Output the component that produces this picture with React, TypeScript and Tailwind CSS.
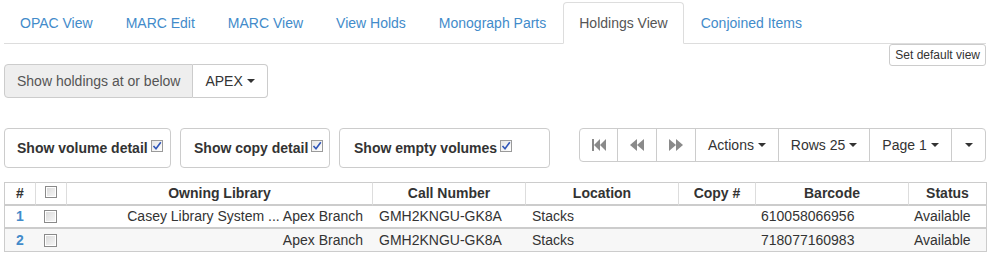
import React from "react";

const Caret = () => (
  <span className="inline-block w-0 h-0 ml-[4px] align-middle border-t-[4px] border-t-[#333] border-x-[4px] border-x-transparent" />
);

const CheckedBox = () => (
  <span className="inline-flex items-center justify-center w-[12px] h-[12px] border border-[#9a9a9a] bg-gradient-to-br from-[#e6e6e6] to-white align-middle ml-[3px] relative top-[-2px]">
    <svg width="10" height="10" viewBox="0 0 10 10">
      <path d="M1.5 5 L4 7.8 L8.8 1.2" fill="none" stroke="#2f55b8" strokeWidth="1.6" />
    </svg>
  </span>
);

const EmptyBox = () => (
  <span className="inline-block w-[13px] h-[13px] border border-[#8a8a8a] bg-gradient-to-br from-[#d8d8d8] to-[#f8f8f8] shadow-[inset_0_0_0_1px_#ffffff] align-middle" />
);

const FastBack = () => (
  <svg width="14" height="12" viewBox="0 0 14 12">
    <rect x="0" y="0" width="2" height="12" fill="#8a8a8a" />
    <path d="M2 6 L8 0 L8 12 Z" fill="#8a8a8a" />
    <path d="M8 6 L14 0 L14 12 Z" fill="#8a8a8a" />
  </svg>
);
const Back = () => (
  <svg width="14" height="12" viewBox="0 0 14 12">
    <path d="M0 6 L7 0 L7 12 Z" fill="#8a8a8a" />
    <path d="M7 6 L14 0 L14 12 Z" fill="#8a8a8a" />
  </svg>
);
const Fwd = () => (
  <svg width="14" height="12" viewBox="0 0 14 12">
    <path d="M0 0 L7 6 L0 12 Z" fill="#8a8a8a" />
    <path d="M7 0 L14 6 L7 12 Z" fill="#8a8a8a" />
  </svg>
);

const tabs = [
  "OPAC View",
  "MARC Edit",
  "MARC View",
  "View Holds",
  "Monograph Parts",
  "Holdings View",
  "Conjoined Items",
];

export default function App() {
  return (
    <div className="font-['Liberation_Sans',Arial,sans-serif] text-[14px] text-[#333] bg-white w-[1001px] h-[265px] overflow-hidden">
      <div className="ml-[4px] w-[982px] pt-[2px]">
        <ul className="flex border-b border-[#ddd]">
          {tabs.map((t) => {
            const active = t === "Holdings View";
            return (
              <li key={t} className="mr-[1px] -mb-px">
                <a
                  className={
                    "block px-[15px] py-[10px] leading-[20px] border rounded-t-[4px] " +
                    (active
                      ? "border-[#ddd] border-b-white bg-white text-[#555]"
                      : "border-transparent text-[#428bca]")
                  }
                >
                  {t}
                </a>
              </li>
            );
          })}
        </ul>

        <div className="flex justify-end h-[20px]">
          <button className="h-[22px] px-[5px] text-[12px] leading-[18px] border border-[#ccc] rounded-[3px] bg-white text-[#333] shrink-0">
            Set default view
          </button>
        </div>

        <div className="flex h-[34px]">
          <span className="flex items-center px-[12px] border border-[#ccc] bg-[#eee] text-[#555] rounded-l-[4px] leading-[20px]">
            Show holdings at or below
          </span>
          <button className="flex items-center px-[12px] border border-l-0 border-[#ccc] bg-white rounded-r-[4px] text-[#333] leading-[20px]">
            APEX
            <Caret />
          </button>
        </div>

        <div className="flex justify-between items-start mt-[30px]">
          <div className="flex gap-[9px]">
            <div className="h-[40px] w-[167px] border border-[#ccc] rounded-[4px] flex items-center pl-[12px] font-bold">
              Show volume detail
              <CheckedBox />
            </div>
            <div className="h-[40px] w-[150px] border border-[#ccc] rounded-[4px] flex items-center pl-[13px] font-bold">
              Show copy detail
              <CheckedBox />
            </div>
            <div className="h-[40px] w-[211px] border border-[#ccc] rounded-[4px] flex items-center pl-[14px] font-bold">
              Show empty volumes
              <CheckedBox />
            </div>
          </div>

          <div className="flex h-[34px]">
            <button className="w-[39px] flex items-center justify-center border border-[#ccc] rounded-l-[4px] bg-white">
              <FastBack />
            </button>
            <button className="w-[40px] -ml-px flex items-center justify-center border border-[#ccc] bg-white">
              <Back />
            </button>
            <button className="w-[40px] -ml-px flex items-center justify-center border border-[#ccc] bg-white">
              <Fwd />
            </button>
            <button className="w-[84px] -ml-px flex items-center justify-center border border-[#ccc] bg-white text-[#333]">
              Actions
              <Caret />
            </button>
            <button className="w-[92px] -ml-px flex items-center justify-center border border-[#ccc] bg-white text-[#333]">
              Rows 25
              <Caret />
            </button>
            <button className="w-[83px] -ml-px flex items-center justify-center border border-[#ccc] bg-white text-[#333]">
              Page 1
              <Caret />
            </button>
            <button className="w-[35px] -ml-px flex items-center justify-center border border-[#ccc] rounded-r-[4px] bg-white">
              <span className="inline-block w-0 h-0 border-t-[4px] border-t-[#333] border-x-[4px] border-x-transparent" />
            </button>
          </div>
        </div>

        <table className="mt-[14px] w-[982px] table-fixed border-separate border-spacing-0 border-x border-[#ccc]">
          <colgroup>
            <col className="w-[30px]" />
            <col className="w-[31px]" />
            <col className="w-[306px]" />
            <col className="w-[153px]" />
            <col className="w-[153px]" />
            <col className="w-[77px]" />
            <col className="w-[153px]" />
            <col className="w-[78px]" />
          </colgroup>
          <thead>
            <tr className="h-[24px]">
              <th className="border-t border-b-2 border-[#ccc] text-center font-bold p-0">#</th>
              <th className="border-t border-b-2 border-l border-[#ccc] border-l-[#ddd] p-0">
                <div className="flex justify-center"><span className="inline-block w-[12px] h-[12px] border border-[#8a8a8a] bg-gradient-to-br from-[#d8d8d8] to-[#f8f8f8] shadow-[inset_0_0_0_1px_#ffffff] relative top-[-2px]" /></div>
              </th>
              <th className="border-t border-b-2 border-l border-[#ccc] border-l-[#ddd] text-center font-bold p-0">Owning Library</th>
              <th className="border-t border-b-2 border-l border-[#ccc] border-l-[#ddd] text-center font-bold p-0">Call Number</th>
              <th className="border-t border-b-2 border-l border-[#ccc] border-l-[#ddd] text-center font-bold p-0">Location</th>
              <th className="border-t border-b-2 border-l border-[#ccc] border-l-[#ddd] text-center font-bold p-0">Copy #</th>
              <th className="border-t border-b-2 border-l border-[#ccc] border-l-[#ddd] text-center font-bold p-0">Barcode</th>
              <th className="border-t border-b-2 border-l border-[#ccc] border-l-[#ddd] text-center font-bold p-0">Status</th>
            </tr>
          </thead>
          <tbody>
            {[
              { n: "1", lib: "Casey Library System ... Apex Branch", bc: "610058066956", bg: "bg-white", b: "border-b-2" },
              { n: "2", lib: "Apex Branch", bc: "718077160983", bg: "bg-[#f7f7f7]", b: "border-b" },
            ].map((r) => (
              <tr key={r.n} className={"h-[23px] " + r.bg}>
                <td className={"p-0 text-center font-bold text-[#428bca] border-[#ccc] " + r.b}>{r.n}</td>
                <td className={"p-0 border-[#ccc] " + r.b}>
                  <div className="flex justify-center"><EmptyBox /></div>
                </td>
                <td className={"p-0 pr-[9px] text-right whitespace-nowrap border-[#ccc] " + r.b}>{r.lib}</td>
                <td className={"p-0 pl-[7px] border-[#ccc] " + r.b}>GMH2KNGU-GK8A</td>
                <td className={"p-0 pl-[7px] border-[#ccc] " + r.b}>Stacks</td>
                <td className={"p-0 border-[#ccc] " + r.b}></td>
                <td className={"p-0 pl-[6px] border-[#ccc] " + r.b}>{r.bc}</td>
                <td className={"p-0 pl-[6px] border-[#ccc] " + r.b}>Available</td>
              </tr>
            ))}
          </tbody>
        </table>
      </div>
    </div>
  );
}
